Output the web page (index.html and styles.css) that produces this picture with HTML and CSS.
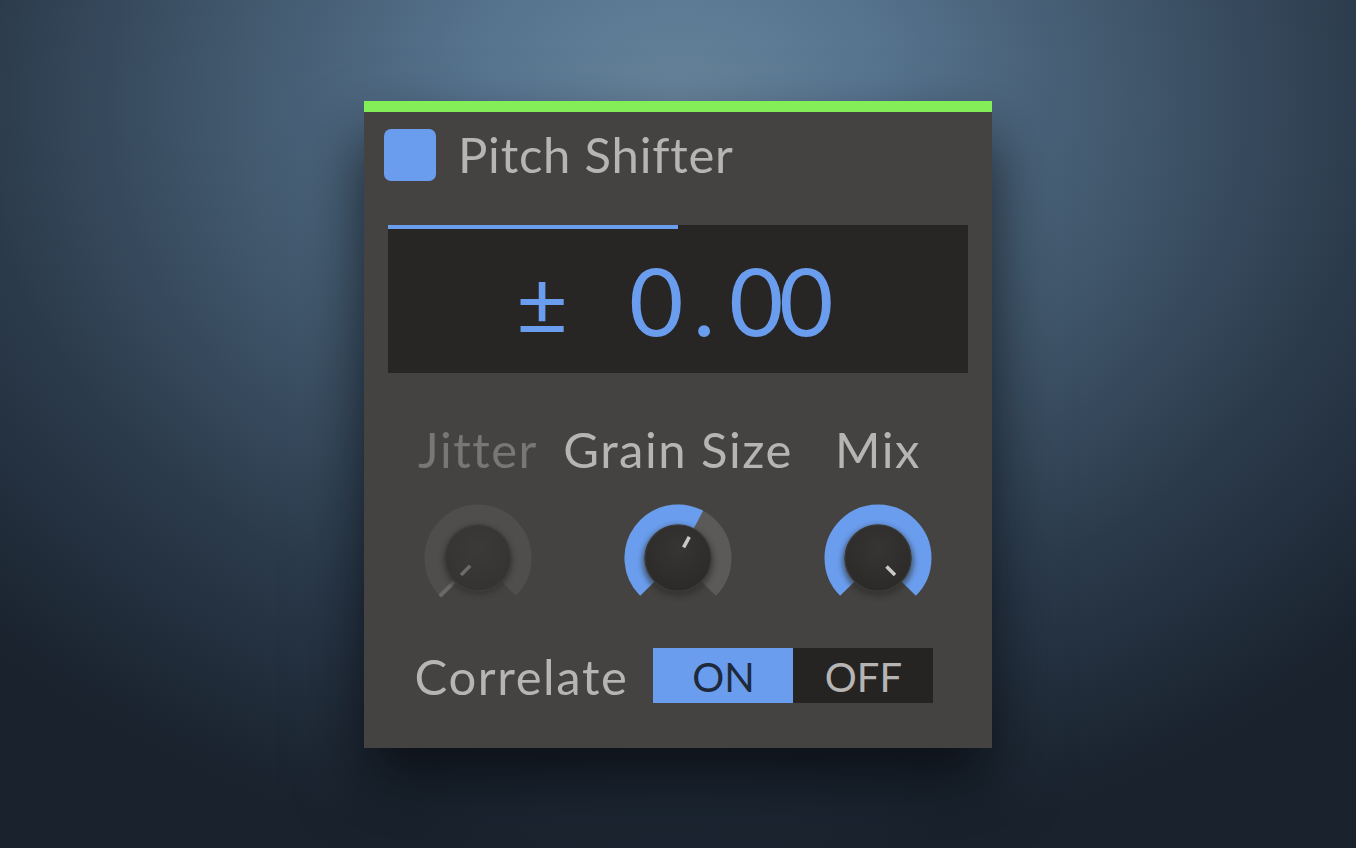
FILE: index.html
```html
<!DOCTYPE html>
<html>
<head>
<meta charset="utf-8">
<link rel="stylesheet" href="styles.css">
</head>
<body>
<div class="panel">
  <div class="accent"></div>
  <div class="header">
    <div class="badge"></div>
    <div class="title">Pitch Shifter</div>
  </div>
  <div class="display">
    <div class="display-bar" style="width:50%"></div>
    <div class="readout">
      <span class="pm">±</span>
      <span class="value"><span class="ch">0</span><span class="ch">.</span><span class="ch">0</span><span class="ch">0</span></span>
    </div>
  </div>
  <div class="knobs">
    <div class="knob-col disabled">
      <div class="knob-label">Jitter</div>
      <svg class="knob" width="110" height="110" viewBox="0 0 110 110">
        <defs>
          <radialGradient id="kb1" cx="50%" cy="35%" r="65%">
            <stop offset="0" stop-color="#3b3a39"/>
            <stop offset="1" stop-color="#343332"/>
          </radialGradient>
          <filter id="sh1" x="-50%" y="-50%" width="200%" height="200%"><feGaussianBlur stdDeviation="2.5"/></filter>
        </defs>
        <path d="M24.24 85.76 A43.5 43.5 0 1 1 85.76 85.76" fill="none" stroke="#4f4e4d" stroke-width="20"/>
        <line x1="16.8" y1="93.2" x2="31.2" y2="78.8" stroke="#6a6968" stroke-width="4"/>
        <circle cx="55" cy="57" r="35" fill="#333231" opacity="0.7" filter="url(#sh1)"/>
        <circle cx="55" cy="55" r="33" fill="url(#kb1)" stroke="#414040" stroke-width="1"/>
        <line x1="47.2" y1="62.8" x2="38" y2="72" stroke="#6c6b69" stroke-width="3.5"/>
      </svg>
    </div>
    <div class="knob-col">
      <div class="knob-label">Grain Size</div>
      <svg class="knob" width="110" height="110" viewBox="0 0 110 110">
        <defs>
          <radialGradient id="kb2" cx="50%" cy="35%" r="65%">
            <stop offset="0" stop-color="#363534"/>
            <stop offset="1" stop-color="#2b2a29"/>
          </radialGradient>
          <filter id="sh2" x="-50%" y="-50%" width="200%" height="200%"><feGaussianBlur stdDeviation="2.5"/></filter>
        </defs>
        <path d="M24.24 85.76 A43.5 43.5 0 1 1 85.76 85.76" fill="none" stroke="#5b5a59" stroke-width="20"/>
        <path d="M24.24 85.76 A43.5 43.5 0 0 1 75.42 16.59" fill="none" stroke="#6a9ded" stroke-width="20"/>
        <circle cx="55" cy="58" r="36" fill="#2a2928" opacity="0.55" filter="url(#sh2)"/>
        <circle cx="55" cy="55" r="33" fill="url(#kb2)" stroke="#3c3b3a" stroke-width="1.2"/>
        <line x1="60.6" y1="44.4" x2="66.3" y2="33.8" stroke="#c9c9c9" stroke-width="3.5"/>
      </svg>
    </div>
    <div class="knob-col">
      <div class="knob-label">Mix</div>
      <svg class="knob" width="110" height="110" viewBox="0 0 110 110">
        <defs>
          <radialGradient id="kb3" cx="50%" cy="35%" r="65%">
            <stop offset="0" stop-color="#363534"/>
            <stop offset="1" stop-color="#2b2a29"/>
          </radialGradient>
          <filter id="sh3" x="-50%" y="-50%" width="200%" height="200%"><feGaussianBlur stdDeviation="2.5"/></filter>
        </defs>
        <path d="M24.24 85.76 A43.5 43.5 0 1 1 85.76 85.76" fill="none" stroke="#6a9ded" stroke-width="20"/>
        <circle cx="55" cy="58" r="36" fill="#2a2928" opacity="0.55" filter="url(#sh3)"/>
        <circle cx="55" cy="55" r="33" fill="url(#kb3)" stroke="#3c3b3a" stroke-width="1.2"/>
        <line x1="63.5" y1="63.5" x2="72" y2="72" stroke="#c9c9c9" stroke-width="3.5"/>
      </svg>
    </div>
  </div>
  <div class="toggle-row">
    <div class="toggle-label">Correlate</div>
    <div class="toggle">
      <div class="seg on">ON</div>
      <div class="seg off">OFF</div>
    </div>
  </div>
</div>
</body>
</html>
```

FILE: styles.css
```css
html, body {
  margin: 0;
  padding: 0;
  height: 100%;
}
body {
  font-family: "Lato", "Open Sans", sans-serif;
  background: radial-gradient(ellipse 72% 90% at 50% 12%, #67849b 0%, #587590 20%, #42596e 45%, #2b3a4b 72%, #19222d 100%);
  display: flex;
  align-items: center;
  justify-content: center;
  overflow: hidden;
}
.panel {
  width: 628px;
  height: 647px;
  background: #444342;
  box-shadow: 0 36px 60px rgba(5, 8, 12, 0.75);
  display: flex;
  flex-direction: column;
}
.accent {
  height: 11px;
  background: #83ee58;
}
.header {
  display: flex;
  align-items: center;
  padding: 17px 20px 0;
  height: 52px;
}
.badge {
  width: 52px;
  height: 52px;
  border-radius: 7px;
  background: #6a9ded;
}
.title {
  margin-left: 22px;
  font-size: 49px;
  letter-spacing: 0.8px;
  color: #b6b5b3;
  line-height: 52px;
  margin-top: -2px;
}
.display {
  margin: 44px 24px 0;
  height: 148px;
  background: #272625;
  position: relative;
  display: flex;
  align-items: center;
  justify-content: center;
}
.display-bar {
  position: absolute;
  left: 0;
  top: 0;
  height: 4px;
  background: #6a9ded;
}
.readout {
  display: flex;
  align-items: baseline;
  color: #6a9ded;
  margin-left: 0;
  margin-right: 11px;
  margin-top: 2px;
}
.pm {
  font-size: 90px;
  margin-right: 61px;
}
.value {
  font-size: 94px;
  display: flex;
}
.ch {
  width: 50px;
  text-align: center;
}
.knobs {
  display: grid;
  grid-template-columns: repeat(3, 200px);
  justify-content: center;
  margin-top: 48px;
}
.knob-col {
  display: flex;
  flex-direction: column;
  align-items: center;
}
.knob-label {
  font-size: 49px;
  letter-spacing: 1.5px;
  line-height: 56px;
  color: #b6b5b3;
  white-space: nowrap;
}
.disabled .knob-label {
  color: #787775;
}
.knob {
  margin-top: 26px;
  display: block;
}
.toggle-row {
  display: flex;
  align-items: center;
  justify-content: center;
  gap: 25px;
  margin-top: 35px;
  padding-right: 8px;
}
.toggle-label {
  font-size: 49px;
  letter-spacing: 1.6px;
  color: #b6b5b3;
  line-height: 56px;
}
.toggle {
  display: flex;
  height: 55px;
}
.seg {
  width: 140px;
  display: flex;
  align-items: center;
  justify-content: center;
  font-size: 40px;
  padding-top: 2px;
  box-sizing: border-box;
}
.seg.on {
  background: #6a9ded;
  color: #1e2a3b;
}
.seg.off {
  background: #252423;
  color: #b6b5b3;
}
```
